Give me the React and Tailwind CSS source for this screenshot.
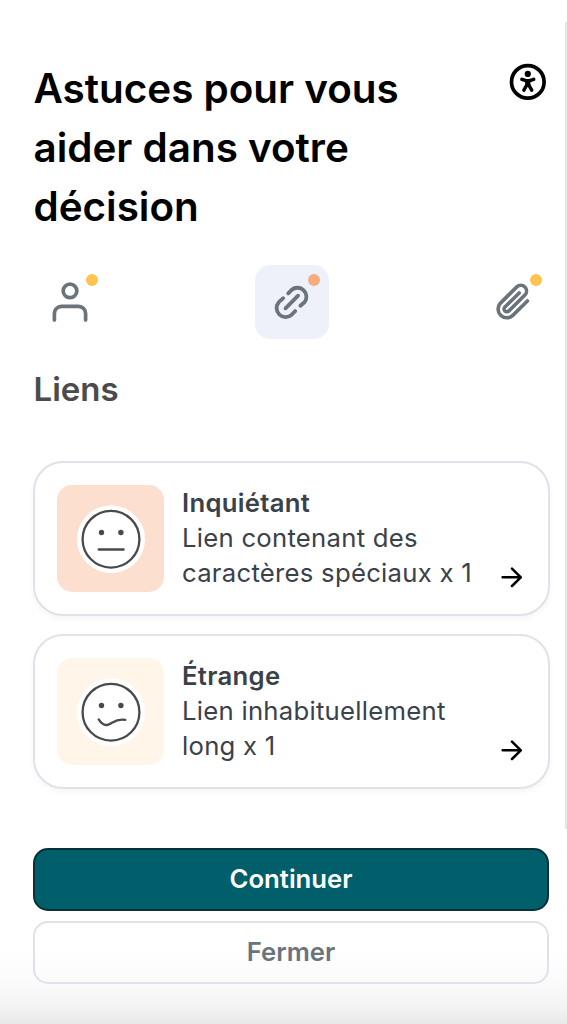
const stroke = {
  fill: 'none',
  stroke: 'currentColor',
  strokeLinecap: 'round',
  strokeLinejoin: 'round',
};

function AccessibilityIcon() {
  return (
    <svg width="38" height="38" viewBox="0 0 38 38" {...stroke}>
      <circle cx="18.8" cy="18.9" r="16.3" strokeWidth="3.7" />
      <circle cx="18.8" cy="10.9" r="3.1" fill="currentColor" stroke="none" />
      <path d="M12.9 16.3 L17 17.7 H20.6 L24.7 16.3" strokeWidth="3.5" />
      <path d="M17.3 18 H20.3 V22 H17.3 Z" fill="currentColor" strokeWidth="2.2" />
      <path d="M14.9 27.2 L17.8 22 H19.8 L22.7 27.2" strokeWidth="3.5" />
    </svg>
  );
}

function UserIcon() {
  return (
    <svg width="74" height="74" viewBox="0 0 74 74" strokeWidth="3.7" {...stroke}>
      <circle cx="37" cy="25.9" r="6.8" />
      <path d="M21.4 55 V48.6 A7 7 0 0 1 28.4 41.4 H45.6 A7 7 0 0 1 52.6 48.6 V55" />
    </svg>
  );
}

function LinkIcon() {
  return (
    <svg width="74" height="74" viewBox="0 0 74 74" strokeWidth="3.8" {...stroke}>
      <path d="M33.2 28.3 L36.7 24.8 A9 9 0 0 1 49.5 37.3 L45.4 40.8" />
      <path d="M28.2 33.2 L23.8 37.2 A9 9 0 0 0 36.6 49.8 L40.2 46.1" />
      <path d="M30.5 43.3 L43.1 30.7" />
    </svg>
  );
}

function ClipIcon() {
  return (
    <svg width="74" height="74" viewBox="0 0 74 74" strokeWidth="3.6" {...stroke}>
      <path d="M50.4 36 L35.8 50.4 A8.7 8.7 0 0 1 23.5 38.1 L39.8 21.9 A5.7 5.7 0 0 1 47.9 30 L31.9 45.9 A2.8 2.8 0 0 1 27.9 41.9 L42.2 28" />
    </svg>
  );
}

function Face({ mouth }) {
  return (
    <svg width="68" height="68" viewBox="0 0 68 68" className="text-[#4a4a4a]" strokeWidth="2.3" {...stroke}>
      <circle cx="34" cy="34.2" r="34" fill="#fff" stroke="none" />
      <circle cx="34" cy="34.2" r="28.4" />
      <circle cx="24.5" cy="27.5" r="2.7" fill="currentColor" stroke="none" />
      <circle cx="43.9" cy="27.5" r="2.7" fill="currentColor" stroke="none" />
      <path d={mouth} />
    </svg>
  );
}

function ArrowIcon() {
  return (
    <svg width="24" height="24" viewBox="0 0 24 24" strokeWidth="2.5" className="text-black" {...stroke}>
      <path d="M2.6 12.3 H20.6 M12 3.6 L20.8 12.3 L12 21" />
    </svg>
  );
}

const tabs = [
  { name: 'Expéditeur', Icon: UserIcon, box: '', dot: 'bg-[#ffc34f]' },
  { name: 'Liens', Icon: LinkIcon, box: 'bg-[#eef1f9]', dot: 'bg-[#f7ac7b]' },
  { name: 'Pièces jointes', Icon: ClipIcon, box: '', dot: 'bg-[#ffc34f]' },
];

const cards = [
  {
    title: 'Inquiétant',
    lines: ['Lien contenant des', 'caractères spéciaux x 1'],
    tile: 'bg-[#fcdfce]',
    mouth: 'M21.7 44.5 H46.7',
  },
  {
    title: 'Étrange',
    lines: ['Lien inhabituellement', 'long x 1'],
    tile: 'bg-[#fff6e9]',
    mouth: 'M21.7 41.4 C24.1 45.2 26.6 47.8 30.6 46.8 C35.6 45.4 38.6 40.2 48.3 41.9',
  },
];

export default function App() {
  return (
    <div className="flex h-[1024px] w-[567px] flex-col overflow-hidden bg-[linear-gradient(to_bottom,#fff_0,#fff_950px,#fafafa_985px,#f3f3f3_1008px,#e8e8e8_1024px)] font-['Inter','Liberation_Sans',sans-serif]">
      <main className="mt-[22px] h-[807px] border-r-2 border-[#e6e6e6] pl-[33px] pr-[15px] pt-[37px]">
        <header className="flex items-start justify-between">
          <h1 className="whitespace-nowrap pl-[0.5px] text-[40.4px] font-semibold leading-[59px] text-black">
            Astuces pour vous
            <br />
            aider dans votre
            <br />
            décision
          </h1>
          <button className="mr-[3px] mt-[4px]" aria-label="Accessibilité">
            <AccessibilityIcon />
          </button>
        </header>

        <nav className="-mr-px mt-[29px] flex justify-between text-[#6b737b]">
          {tabs.map(({ name, Icon, box, dot }) => (
            <button key={name} aria-label={name} className={`relative size-[74px] rounded-[15px] ${box}`}>
              <Icon />
              <span className={`absolute left-[53px] top-[9px] size-[12px] rounded-full ${dot}`} />
            </button>
          ))}
        </nav>

        <h2 className="mt-[25px] pl-[0.5px] text-[33px] font-semibold leading-[50px] text-[#4b4b4b]">Liens</h2>

        <div className="mt-[47px] flex flex-col gap-[18px]">
          {cards.map((card) => (
            <article
              key={card.title}
              className="flex h-[155px] rounded-[30px] border-2 border-[#dfe2ea] bg-white pl-[22px] pt-[22px] shadow-[0_3px_6px_rgba(0,0,0,0.04)]"
            >
              <div className={`flex size-[107px] shrink-0 items-center justify-center rounded-[15px] ${card.tile}`}>
                <Face mouth={card.mouth} />
              </div>
              <div className="ml-[18px] w-[318px] whitespace-nowrap text-[25.7px] leading-[35.2px] text-[#3b4149]">
                <h3 className="font-semibold tracking-[0.3px]">{card.title}</h3>
                <p className="tracking-[0.26px]">
                  {card.lines[0]}
                  <br />
                  {card.lines[1]}
                </p>
              </div>
              <div className="mt-[80px]">
                <ArrowIcon />
              </div>
            </article>
          ))}
        </div>
      </main>

      <footer className="mt-[19px] flex flex-col gap-[10px] pl-[33px] pr-[18px] text-[25.7px] font-semibold">
        <button className="h-[63px] rounded-[15px] border-2 border-[#073039] bg-[#005f6b] text-white">Continuer</button>
        <button className="h-[63px] rounded-[15px] border-2 border-[#dfe2ea] text-[#6b737b]">Fermer</button>
      </footer>
    </div>
  );
}
